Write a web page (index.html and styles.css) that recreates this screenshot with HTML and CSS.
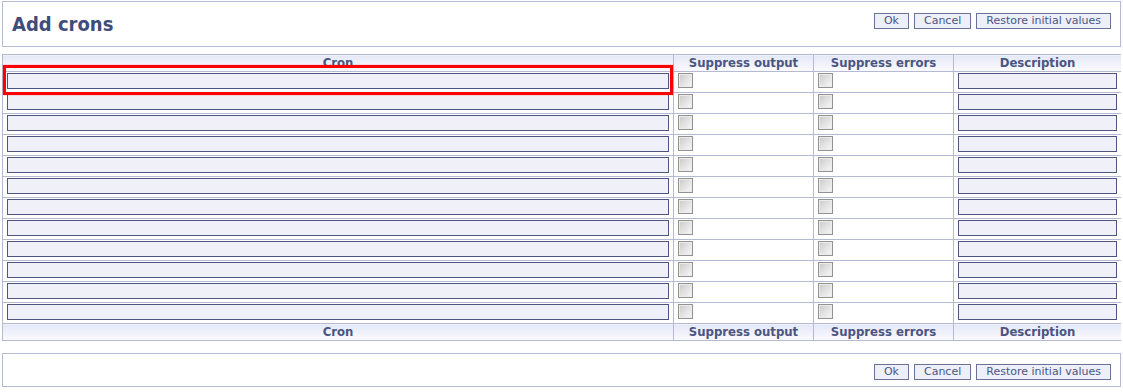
FILE: index.html
```html
<!DOCTYPE html>
<html>
<head>
<meta charset="utf-8">
<title>Add crons</title>
<link rel="stylesheet" href="styles.css">
</head>
<body>
<div class="panel panel-top">
  <h1 class="title">Add crons</h1>
  <div class="actions">
    <button class="btn">Ok</button>
    <button class="btn">Cancel</button>
    <button class="btn">Restore initial values</button>
  </div>
</div>

<div class="grid-wrap">
  <table class="crons">
    <colgroup>
      <col class="c-cron">
      <col class="c-out">
      <col class="c-err">
      <col class="c-desc">
    </colgroup>
    <thead>
      <tr><th>Cron</th><th>Suppress output</th><th>Suppress errors</th><th>Description</th></tr>
    </thead>
    <tbody>
      <tr><td><input class="field" type="text"></td><td><input class="chk" type="checkbox"></td><td><input class="chk" type="checkbox"></td><td><input class="field" type="text"></td></tr>
      <tr><td><input class="field" type="text"></td><td><input class="chk" type="checkbox"></td><td><input class="chk" type="checkbox"></td><td><input class="field" type="text"></td></tr>
      <tr><td><input class="field" type="text"></td><td><input class="chk" type="checkbox"></td><td><input class="chk" type="checkbox"></td><td><input class="field" type="text"></td></tr>
      <tr><td><input class="field" type="text"></td><td><input class="chk" type="checkbox"></td><td><input class="chk" type="checkbox"></td><td><input class="field" type="text"></td></tr>
      <tr><td><input class="field" type="text"></td><td><input class="chk" type="checkbox"></td><td><input class="chk" type="checkbox"></td><td><input class="field" type="text"></td></tr>
      <tr><td><input class="field" type="text"></td><td><input class="chk" type="checkbox"></td><td><input class="chk" type="checkbox"></td><td><input class="field" type="text"></td></tr>
      <tr><td><input class="field" type="text"></td><td><input class="chk" type="checkbox"></td><td><input class="chk" type="checkbox"></td><td><input class="field" type="text"></td></tr>
      <tr><td><input class="field" type="text"></td><td><input class="chk" type="checkbox"></td><td><input class="chk" type="checkbox"></td><td><input class="field" type="text"></td></tr>
      <tr><td><input class="field" type="text"></td><td><input class="chk" type="checkbox"></td><td><input class="chk" type="checkbox"></td><td><input class="field" type="text"></td></tr>
      <tr><td><input class="field" type="text"></td><td><input class="chk" type="checkbox"></td><td><input class="chk" type="checkbox"></td><td><input class="field" type="text"></td></tr>
      <tr><td><input class="field" type="text"></td><td><input class="chk" type="checkbox"></td><td><input class="chk" type="checkbox"></td><td><input class="field" type="text"></td></tr>
      <tr><td><input class="field" type="text"></td><td><input class="chk" type="checkbox"></td><td><input class="chk" type="checkbox"></td><td><input class="field" type="text"></td></tr>
    </tbody>
    <tfoot>
      <tr><th>Cron</th><th>Suppress output</th><th>Suppress errors</th><th>Description</th></tr>
    </tfoot>
  </table>
  <div class="highlight"></div>
</div>

<div class="panel panel-bottom">
  <div class="actions">
    <button class="btn">Ok</button>
    <button class="btn">Cancel</button>
    <button class="btn">Restore initial values</button>
  </div>
</div>
</body>
</html>
```

FILE: styles.css
```css
html, body {
  background: #ffffff;
}

body {
  margin: 1px 2px;
  width: 1119px;
  font-family: "DejaVu Sans", Verdana, sans-serif;
  color: #4a5582;
}

.panel {
  box-sizing: border-box;
  border: 1px solid #b6b9d2;
  display: flex;
  justify-content: space-between;
  align-items: flex-start;
}

.panel-top {
  height: 46px;
  padding: 11px 9px 0 9px;
}

.panel-bottom {
  height: 34px;
  margin-top: 12px;
  padding: 10px 9px 0 9px;
  justify-content: flex-end;
}

.title {
  margin: 0;
  font-family: "DejaVu Sans Condensed", "DejaVu Sans", sans-serif;
  font-stretch: condensed;
  font-size: 20px;
  line-height: 22px;
  font-weight: bold;
  color: #3f4c7c;
}

.actions {
  display: flex;
  gap: 5px;
}

.btn {
  box-sizing: border-box;
  height: 16px;
  margin: 0;
  padding: 0 9px;
  border: 1px solid #6b7298;
  border-radius: 0;
  background: #eef0f9;
  color: #4a5585;
  font-family: "DejaVu Sans", Verdana, sans-serif;
  font-size: 11px;
  line-height: 14px;
}

.grid-wrap {
  position: relative;
  margin-top: 7px;
}

.crons {
  border-collapse: collapse;
  table-layout: fixed;
  width: 1119px;
}

.c-cron { width: 671px; }
.c-out { width: 140px; }
.c-err { width: 140px; }
.c-desc { width: 168px; }

.crons th,
.crons td {
  border: 1px solid #b6b9d2;
}

.crons th {
  height: 16px;
  padding: 0;
  background: linear-gradient(#e4e7f6, #fbfbff);
  font-family: "DejaVu Sans Condensed", "DejaVu Sans", sans-serif;
  font-stretch: condensed;
  font-size: 13px;
  font-weight: bold;
  line-height: 16px;
  text-align: center;
  color: #4a5582;
}

.crons td {
  padding: 1px 4px 3px 4px;
  vertical-align: top;
}

.field {
  display: block;
  box-sizing: border-box;
  width: 100%;
  height: 16px;
  margin: 0;
  padding: 0 2px;
  border: 1px solid #4e5580;
  border-radius: 0;
  background: #f0f1f8;
  font-family: "DejaVu Sans", sans-serif;
  font-size: 11px;
  outline: none;
}

.chk {
  appearance: none;
  -webkit-appearance: none;
  display: block;
  box-sizing: border-box;
  width: 15px;
  height: 15px;
  margin: 0;
  border: 1px solid #929292;
  border-radius: 0;
  background: linear-gradient(135deg, #c8c8c8 0%, #e2e2e2 50%, #f7f7f7 100%);
  box-shadow: inset 0 0 0 1px #ececec;
}

.highlight {
  position: absolute;
  left: 1px;
  top: 11px;
  width: 670px;
  height: 30px;
  box-sizing: border-box;
  border: 3px solid #ff0000;
  box-shadow: 0 0 1px rgba(255, 0, 0, 0.6);
  pointer-events: none;
}
```
